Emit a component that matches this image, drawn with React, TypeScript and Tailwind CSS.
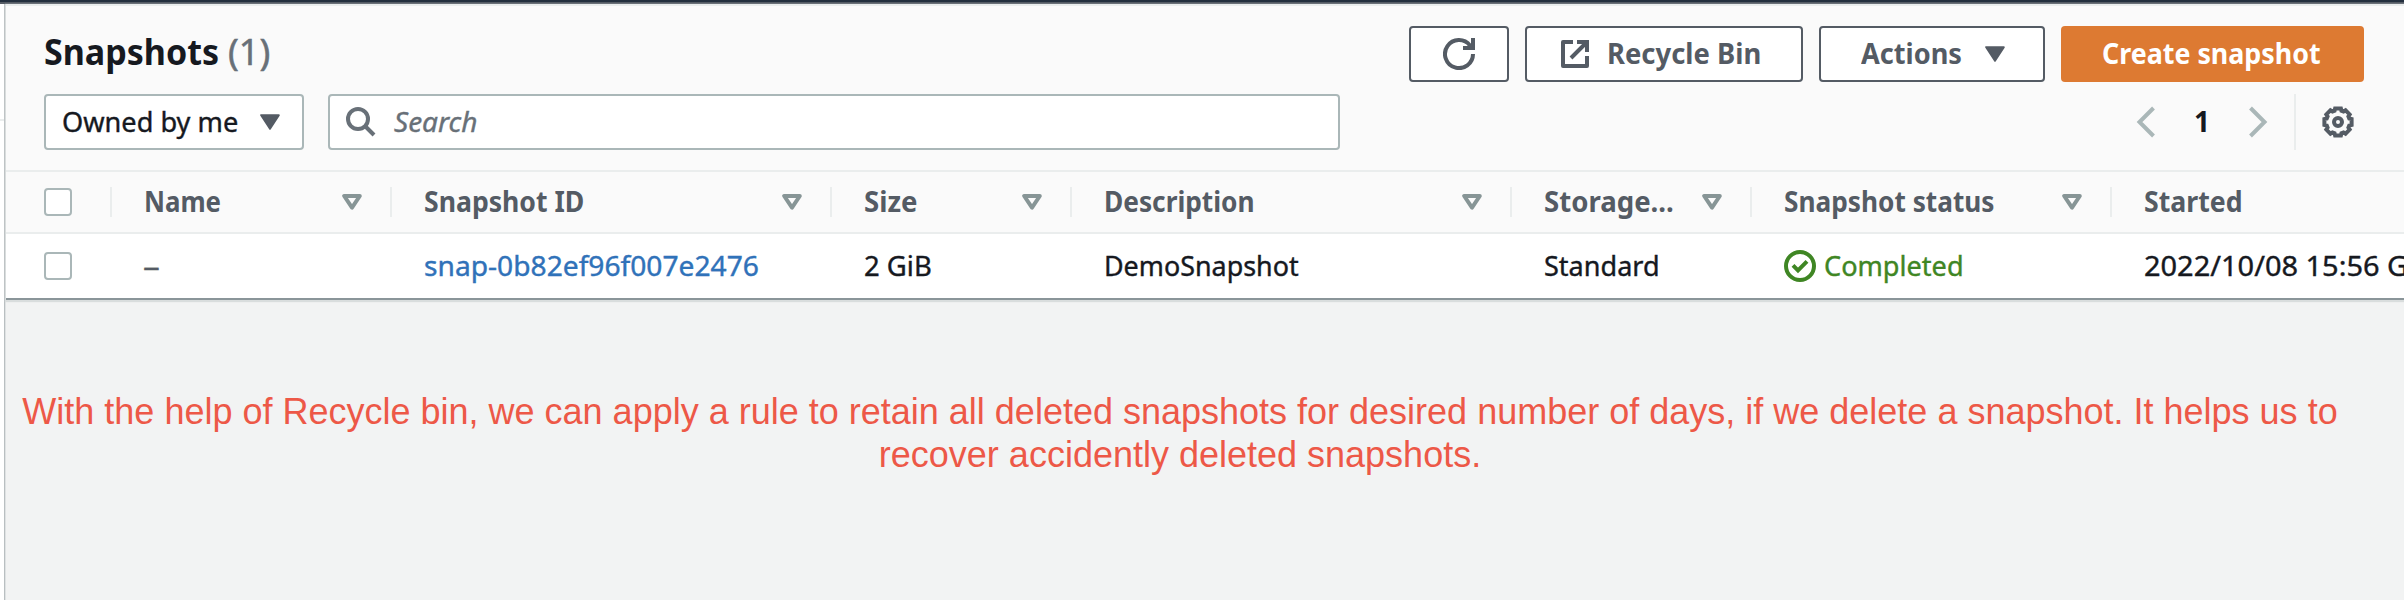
import type { ReactNode } from "react";
import { clsx } from "clsx";

function Label({ className, children }: { className?: string; children: ReactNode }) {
  return (
    <span className={clsx("inline-block shrink-0 origin-left whitespace-nowrap pb-0.5 leading-none", className)}>
      {children}
    </span>
  );
}

function Caret() {
  return (
    <svg className="h-4 w-5 shrink-0" viewBox="0 0 20 16">
      <path d="M1.2 1.2h17.6L10 14.8z" fill="#545b64" stroke="#545b64" strokeWidth="2" strokeLinejoin="round" />
    </svg>
  );
}

function SortIcon() {
  return (
    <svg className="h-4 w-5 shrink-0" viewBox="0 0 20 16">
      <path d="M2.2 2h15.6L10 13.6z" fill="none" stroke="#879596" strokeWidth="4" strokeLinejoin="round" />
    </svg>
  );
}

function RefreshIcon() {
  return (
    <svg className="size-8" viewBox="0 0 32 32" fill="none" stroke="#545b64" strokeWidth="4">
      <path d="M30 16A14 14 0 1 1 27 7.4L29 10" />
      <path d="M20 10h10V0" />
    </svg>
  );
}

function ExternalIcon() {
  return (
    <svg className="size-7" viewBox="0 0 28 28" fill="none" stroke="#545b64" strokeWidth="4">
      <path d="M12 2H2v24h24V16" strokeLinejoin="round" />
      <path d="M16 2h10v10M10 18L25 3" />
    </svg>
  );
}

function SearchIcon() {
  return (
    <svg className="size-[30px]" viewBox="0 0 30 30" fill="none" stroke="#687078" strokeWidth="4">
      <circle cx="12" cy="12" r="10" />
      <path d="M19 19l9 9" />
    </svg>
  );
}

function Chevron({ flip }: { flip?: boolean }) {
  return (
    <svg className={clsx("h-8 w-5", flip && "-scale-x-100")} viewBox="0 0 20 32" fill="none" stroke="#aab7b8" strokeWidth="4">
      <path d="M17.5 2L3.5 16l14 14" />
    </svg>
  );
}

const gearOutline = Array.from({ length: 8 }, (_, k) =>
  [
    [-12, 13.9],
    [12, 13.9],
    [17, 11.8],
    [28, 11.8],
  ].map(([offset, radius]) => {
    const angle = ((k * 45 + offset) * Math.PI) / 180;
    return `${(16 + radius * Math.cos(angle)).toFixed(2)},${(16 + radius * Math.sin(angle)).toFixed(2)}`;
  }),
)
  .flat()
  .join(" ");

function GearIcon() {
  return (
    <svg className="size-8" viewBox="0 0 32 32" fill="none" stroke="#545b64" strokeWidth="4">
      <polygon points={gearOutline} />
      <circle cx="16" cy="16" r="4" />
    </svg>
  );
}

function CheckIcon() {
  return (
    <svg className="size-8" viewBox="0 0 32 32" fill="none" stroke="#3f8624" strokeWidth="4">
      <circle cx="16" cy="16" r="14" />
      <path d="M9 15.4l5 5 9-9" />
    </svg>
  );
}

function Checkbox() {
  return <span className="block size-7 rounded-[4px] border-2 border-[#aab7b8] bg-white" />;
}

const grid = "grid grid-cols-[106px_280px_440px_240px_440px_240px_360px_292px]";

const columns = [
  { title: "Name", fit: "scale-x-[0.922]" },
  { title: "Snapshot ID", fit: "scale-x-[0.95]" },
  { title: "Size", fit: "scale-x-[0.985]" },
  { title: "Description", fit: "scale-x-[0.938]" },
  { title: "Storage...", fit: "scale-x-[0.985]" },
  { title: "Snapshot status", fit: "scale-x-[0.937]" },
];

export default function App() {
  return (
    <div className="flex h-[600px] w-full flex-col overflow-hidden bg-[#f2f3f3] font-['Noto_Sans',sans-serif] text-[28px] text-[#16191f]">
      <div className="h-0.5 shrink-0 bg-[#232f3e]" />
      <div className="h-0.5 shrink-0 bg-[#545b64]" />
      <div className="flex min-h-0 flex-1">
        <aside className="w-1 shrink-0 bg-white pt-[115px]">
          <div className="h-0.5 bg-[#eaeded]" />
        </aside>
        <div className="w-px shrink-0 bg-[#b9bfc1]" />
        <div className="w-px shrink-0 bg-[#dfe2e3]" />
        <main className="min-w-0 flex-1">
          <section className="overflow-hidden border-b-2 border-[#8a9599] bg-white shadow-[0_1px_1px_1px_#d9dddd]">
            <div className="h-[168px] border-y-2 border-[#eaeded] bg-[#fafafa] pr-10 pl-[38px]">
              <div className="flex h-[76px] items-start justify-between pt-5">
                <h1 className="flex h-[53px] items-center text-[36px]">
                  <Label className="w-[184px] scale-x-[0.945] pb-0 font-bold">Snapshots</Label>
                  <Label className="pb-0 text-[#687078] [-webkit-text-stroke:0.5px]">(1)</Label>
                </h1>
                <div className="flex gap-4 font-bold text-[#545b64]">
                  <button className="flex h-14 w-[100px] items-center justify-center rounded-[4px] border-2 border-[#545b64] bg-white">
                    <RefreshIcon />
                  </button>
                  <button className="flex h-14 w-[278px] items-center gap-[18px] rounded-[4px] border-2 border-[#545b64] bg-white pl-[34px]">
                    <ExternalIcon />
                    <Label className="scale-x-[0.979]">Recycle Bin</Label>
                  </button>
                  <button className="flex h-14 w-[226px] items-center justify-between rounded-[4px] border-2 border-[#545b64] bg-white pr-[38px] pl-10">
                    <Label className="scale-x-[0.97]">Actions</Label>
                    <Caret />
                  </button>
                  <button className="flex h-14 w-[303px] items-center rounded-[4px] bg-[#dd7a32] pl-[41px] text-white">
                    <Label className="scale-x-[0.958]">Create snapshot</Label>
                  </button>
                </div>
              </div>
              <div className="mt-3 flex h-14 items-center">
                <div className="flex h-14 w-[260px] items-center justify-between rounded-[4px] border-2 border-[#aab7b8] bg-white pr-[22px] pl-4">
                  <Label className="scale-x-[0.97] [-webkit-text-stroke:0.4px]">Owned by me</Label>
                  <Caret />
                </div>
                <div className="ml-6 flex h-14 w-[1012px] items-center gap-[18px] rounded-[4px] border-2 border-[#aab7b8] bg-white pl-4">
                  <SearchIcon />
                  <Label className="pb-0 text-[#687078] italic [-webkit-text-stroke:0.4px]">Search</Label>
                </div>
                <div className="ml-auto flex h-14 items-center">
                  <Chevron />
                  <Label className="w-[92px] text-center font-bold">1</Label>
                  <Chevron flip />
                  <div className="mr-[26px] ml-[26px] h-14 w-0.5 bg-[#eaeded]" />
                  <GearIcon />
                  <div className="w-2.5" />
                </div>
              </div>
            </div>
            <div className={clsx(grid, "h-[62px] items-center border-b-2 border-[#eaeded] bg-[#fafafa] font-bold text-[#545b64]")}>
              <div className="flex h-[30px] items-center justify-between border-r-2 border-[#eaeded] pl-[38px]">
                <Checkbox />
              </div>
              {columns.map((c) => (
                <div key={c.title} className="flex h-[30px] items-center justify-between border-r-2 border-[#eaeded] pr-7 pl-8">
                  <Label className={c.fit}>{c.title}</Label>
                  <SortIcon />
                </div>
              ))}
              <div className="flex h-[30px] items-center pl-8">
                <Label className="scale-x-[0.953]">Started</Label>
              </div>
            </div>
            <div className={clsx(grid, "h-16 items-center [-webkit-text-stroke:0.4px]")}>
              <div className="pl-[38px]">
                <Checkbox />
              </div>
              <div className="flex pl-[31px] text-[#545b64]">
                <Label className="scale-x-[1.2]">–</Label>
              </div>
              <div className="flex pl-8 text-[#3072b9]">
                <Label className="scale-x-[1.006]">snap-0b82ef96f007e2476</Label>
              </div>
              <div className="flex pl-8">
                <Label className="scale-x-[0.98]">2 GiB</Label>
              </div>
              <div className="flex pl-8">
                <Label className="scale-x-[0.96]">DemoSnapshot</Label>
              </div>
              <div className="flex pl-8">
                <Label className="scale-x-[0.966]">Standard</Label>
              </div>
              <div className="flex items-center gap-2 pl-8 text-[#3f8624]">
                <CheckIcon />
                <Label className="scale-x-[0.968]">Completed</Label>
              </div>
              <div className="flex overflow-hidden py-1 pl-8">
                <Label className="scale-x-[1.034]">2022/10/08 15:56 GMT+5:30</Label>
              </div>
            </div>
          </section>
          <p className="mt-[90px] w-[2348px] text-center font-['Liberation_Sans',sans-serif] text-[36px] leading-[43px] text-[#ed5847]">
            With the help of Recycle bin, we can apply a rule to retain all deleted snapshots for desired number of days, if we delete a snapshot. It helps us to recover accidently deleted snapshots.
          </p>
        </main>
      </div>
    </div>
  );
}
